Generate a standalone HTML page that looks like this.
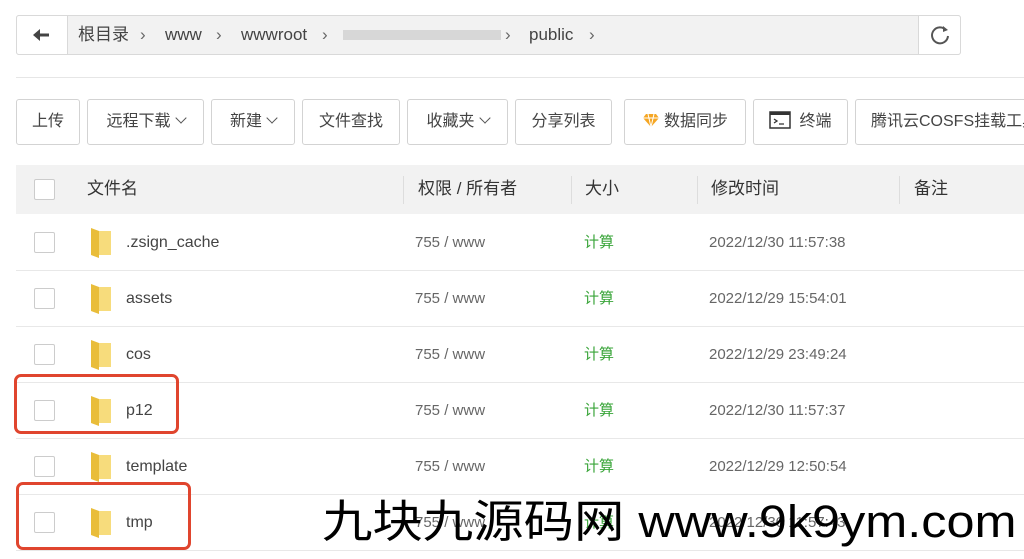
<!DOCTYPE html>
<html><head><meta charset="utf-8"><style>
*{box-sizing:border-box;margin:0;padding:0}
body{width:1024px;height:559px;overflow:hidden;background:#fff;font-family:"Liberation Sans","Noto Sans CJK SC",sans-serif;color:#333;position:relative}
.abs{position:absolute}
.crumb{left:16px;top:15px;width:945px;height:40px;border:1px solid #d9d9d9;border-radius:3px;background:#f2f2f2}
.back{left:16px;top:15px;width:52px;height:40px;border:1px solid #d9d9d9;border-radius:3px 0 0 3px;background:#fff}
.refresh{left:918px;top:15px;width:43px;height:40px;border:1px solid #d9d9d9;border-radius:0 3px 3px 0;background:#fff}
.ct{top:24px;font-size:17px;color:#444;line-height:22px}
.btn{top:99px;height:46px;border:1px solid #d3d3d3;border-radius:3px;background:#fff;font-size:16px;color:#444;line-height:44px;text-align:center;white-space:nowrap;overflow:hidden}
.hdr{left:16px;top:165px;width:1008px;height:49px;background:#f2f2f2}
.ht{top:178px;font-size:17px;color:#333;line-height:22px}
.sep{top:176px;width:1px;height:28px;background:#ddd}
.cb{width:21px;height:21px;border:1px solid #ccc;border-radius:2px;background:#fff}
.line{left:16px;width:1008px;height:1px;background:#e8e8e8}
.name{font-size:16px;color:#444;line-height:20px}
.perm{left:415px;font-size:15px;color:#666;line-height:20px}
.sz{left:584px;font-size:15px;color:#3aa53a;line-height:20px}
.tm{left:709px;font-size:15px;color:#666;line-height:20px}
.red{border:3px solid #e0452e;border-radius:7px}
.chev{display:inline-block;width:8px;height:8px;border-right:1.5px solid #555;border-bottom:1.5px solid #555;transform:rotate(45deg);margin-left:6px;position:relative;top:-4px}
</style></head><body>
<div class="abs crumb"></div>
<div class="abs back"><svg width="50" height="38"><path d="M18 19h14" stroke="#444" stroke-width="3"/><path d="M16 19l7-6v12z" fill="#444"/></svg></div>
<div class="abs refresh"><svg width="41" height="38"><path d="M27 14a8 8 0 1 0 2 6" stroke="#555" stroke-width="2" fill="none"/><path d="M24 10l5 4-5 2z" fill="#555"/></svg></div>
<div class="abs ct" style="left:78px">根目录</div>
<div class="abs ct" style="left:140px;color:#666">›</div>
<div class="abs ct" style="left:165px">www</div>
<div class="abs ct" style="left:216px;color:#666">›</div>
<div class="abs ct" style="left:241px">wwwroot</div>
<div class="abs ct" style="left:322px;color:#666">›</div>
<div class="abs" style="left:343px;top:30px;width:158px;height:10px;background:#ccc;opacity:.7"></div>
<div class="abs ct" style="left:505px;color:#666">›</div>
<div class="abs ct" style="left:529px">public</div>
<div class="abs ct" style="left:589px;color:#666">›</div>
<div class="abs" style="left:16px;top:77px;width:1008px;height:1px;background:#e6e6e6"></div>

<div class="abs btn" style="left:16px;width:64px">上传</div>
<div class="abs btn" style="left:87px;width:117px">远程下载<span class="chev"></span></div>
<div class="abs btn" style="left:211px;width:84px">新建<span class="chev"></span></div>
<div class="abs btn" style="left:302px;width:98px">文件查找</div>
<div class="abs btn" style="left:407px;width:101px">收藏夹<span class="chev"></span></div>
<div class="abs btn" style="left:515px;width:97px">分享列表</div>
<div class="abs btn" style="left:624px;width:122px"><svg width="18" height="14" style="vertical-align:-1px;margin-right:4px"><path d="M4 1h10l3 4-8 9-8-9z" fill="#f5a623"/><path d="M1 5h16M6 1l3 13 3-13" stroke="#fff" stroke-width="1" fill="none"/></svg>数据同步</div>
<div class="abs btn" style="left:753px;width:95px"><svg width="22" height="18" style="vertical-align:-3px;margin-right:8px"><rect x="1" y="1" width="20" height="16" fill="none" stroke="#333" stroke-width="1.5"/><rect x="1" y="1" width="20" height="3" fill="#333"/><path d="M5 8l3 2-3 2M10 13h5" stroke="#333" stroke-width="1.3" fill="none"/></svg>终端</div>
<div class="abs btn" style="left:855px;width:180px;text-align:left;padding-left:15px">腾讯云COSFS挂载工具</div>

<div class="abs hdr"></div>
<div class="abs cb" style="left:34px;top:179px"></div>
<div class="abs ht" style="left:87px">文件名</div>
<div class="abs sep" style="left:403px"></div>
<div class="abs ht" style="left:418px">权限 / 所有者</div>
<div class="abs sep" style="left:571px"></div>
<div class="abs ht" style="left:585px">大小</div>
<div class="abs sep" style="left:697px"></div>
<div class="abs ht" style="left:711px">修改时间</div>
<div class="abs sep" style="left:899px"></div>
<div class="abs ht" style="left:914px">备注</div>

<div class="abs cb" style="left:34px;top:232px"></div><svg class="abs" style="left:89px;top:227px" width="24" height="32"><path d="M10 4h12v24H10z" fill="#f7dc7c"/><path d="M2 1l8 3v27l-8-3z" fill="#e9bd3a"/></svg><div class="abs name" style="left:126px;top:233px">.zsign_cache</div><div class="abs perm" style="top:233px">755 / www</div><div class="abs sz" style="top:233px">计算</div><div class="abs tm" style="top:233px">2022/12/30 11:57:38</div><div class="abs line" style="top:270px"></div>
<div class="abs cb" style="left:34px;top:288px"></div><svg class="abs" style="left:89px;top:283px" width="24" height="32"><path d="M10 4h12v24H10z" fill="#f7dc7c"/><path d="M2 1l8 3v27l-8-3z" fill="#e9bd3a"/></svg><div class="abs name" style="left:126px;top:289px">assets</div><div class="abs perm" style="top:289px">755 / www</div><div class="abs sz" style="top:289px">计算</div><div class="abs tm" style="top:289px">2022/12/29 15:54:01</div><div class="abs line" style="top:326px"></div>
<div class="abs cb" style="left:34px;top:344px"></div><svg class="abs" style="left:89px;top:339px" width="24" height="32"><path d="M10 4h12v24H10z" fill="#f7dc7c"/><path d="M2 1l8 3v27l-8-3z" fill="#e9bd3a"/></svg><div class="abs name" style="left:126px;top:345px">cos</div><div class="abs perm" style="top:345px">755 / www</div><div class="abs sz" style="top:345px">计算</div><div class="abs tm" style="top:345px">2022/12/29 23:49:24</div><div class="abs line" style="top:382px"></div>
<div class="abs cb" style="left:34px;top:400px"></div><svg class="abs" style="left:89px;top:395px" width="24" height="32"><path d="M10 4h12v24H10z" fill="#f7dc7c"/><path d="M2 1l8 3v27l-8-3z" fill="#e9bd3a"/></svg><div class="abs name" style="left:126px;top:401px">p12</div><div class="abs perm" style="top:401px">755 / www</div><div class="abs sz" style="top:401px">计算</div><div class="abs tm" style="top:401px">2022/12/30 11:57:37</div><div class="abs line" style="top:438px"></div>
<div class="abs cb" style="left:34px;top:456px"></div><svg class="abs" style="left:89px;top:451px" width="24" height="32"><path d="M10 4h12v24H10z" fill="#f7dc7c"/><path d="M2 1l8 3v27l-8-3z" fill="#e9bd3a"/></svg><div class="abs name" style="left:126px;top:457px">template</div><div class="abs perm" style="top:457px">755 / www</div><div class="abs sz" style="top:457px">计算</div><div class="abs tm" style="top:457px">2022/12/29 12:50:54</div><div class="abs line" style="top:494px"></div>
<div class="abs cb" style="left:34px;top:512px"></div><svg class="abs" style="left:89px;top:507px" width="24" height="32"><path d="M10 4h12v24H10z" fill="#f7dc7c"/><path d="M2 1l8 3v27l-8-3z" fill="#e9bd3a"/></svg><div class="abs name" style="left:126px;top:513px">tmp</div><div class="abs perm" style="top:513px">755 / www</div><div class="abs sz" style="top:513px">计算</div><div class="abs tm" style="top:513px">2022/12/30 11:57:43</div><div class="abs line" style="top:550px"></div>

<div class="abs red" style="left:14px;top:374px;width:165px;height:60px"></div>
<div class="abs red" style="left:16px;top:482px;width:175px;height:68px"></div>
<div class="abs" style="left:322px;top:494px;font-size:45px;line-height:56px;color:#000;white-space:nowrap;transform:scaleX(1.12);transform-origin:0 0">九块九源码网 www.9k9ym.com</div>
</body></html>
